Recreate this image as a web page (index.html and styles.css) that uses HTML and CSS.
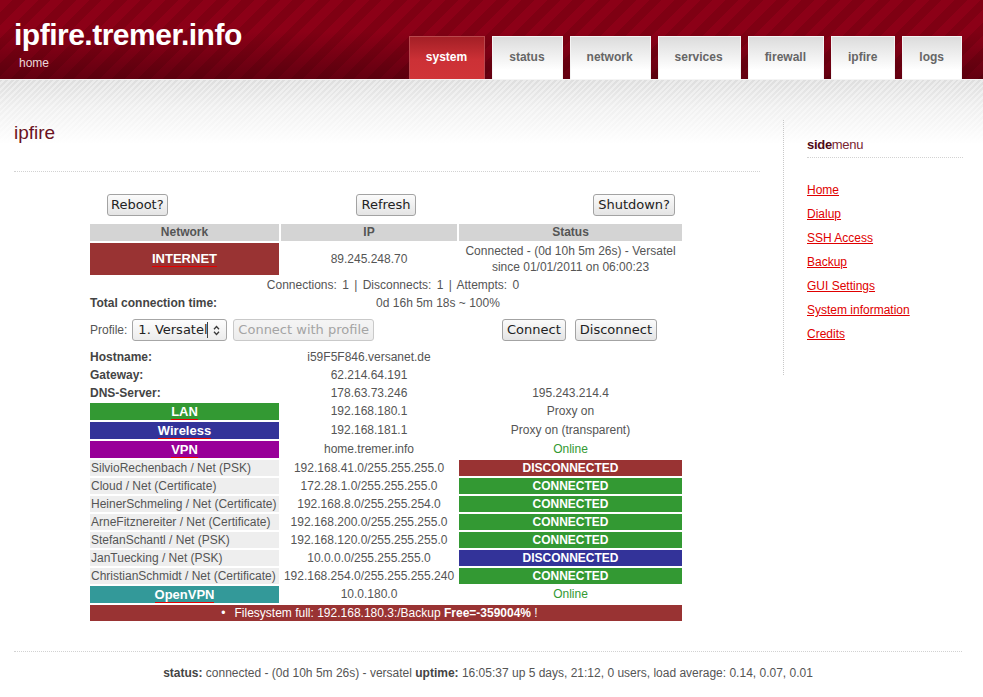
FILE: index.html
```html
<!DOCTYPE html>
<html lang="en">
<head>
<meta charset="utf-8">
<title>ipfire.tremer.info - home</title>
<link rel="stylesheet" href="styles.css">
</head>
<body>
<header class="header">
  <div class="brand">
    <h1 class="brand-title">ipfire.tremer.info</h1>
    <div class="brand-sub">home</div>
  </div>
  <nav class="nav">
    <a class="tab active" href="#">system</a>
    <a class="tab" href="#">status</a>
    <a class="tab" href="#">network</a>
    <a class="tab" href="#">services</a>
    <a class="tab" href="#">firewall</a>
    <a class="tab" href="#">ipfire</a>
    <a class="tab" href="#">logs</a>
  </nav>
</header>
<div class="band">
  <div class="layout">
    <main class="main">
      <h2 class="page-title">ipfire</h2>
      <div class="panel">
        <div class="actions">
          <button class="btn btn-reboot">Reboot?</button>
          <button class="btn">Refresh</button>
          <button class="btn btn-shutdown">Shutdown?</button>
        </div>
        <div class="grid">
          <div class="th">Network</div>
          <div class="th">IP</div>
          <div class="th">Status</div>

          <div class="net net-tall bg-red"><a href="#">INTERNET</a></div>
          <div class="c c-tall">89.245.248.70</div>
          <div class="c">Connected - (0d 10h 5m 26s) - Versatel<br>since 01/01/2011 on 06:00:23</div>

          <div class="span conn">Connections: 1 | Disconnects: 1 | Attempts: 0</div>
          <div class="span total"><span class="lbl total-lbl">Total connection time:</span><span class="total-val">0d 16h 5m 18s ~ 100%</span></div>

          <div class="span profile">
            <span class="profile-lbl">Profile:</span>
            <span class="select"><span class="select-text">1. Versatel</span><svg class="select-arrow" viewBox="0 0 7 11" width="7" height="11"><path d="M1 4.2 L3.5 1.5 L6 4.2 M1 6.8 L3.5 9.5 L6 6.8" fill="none" stroke="#3a3a3a" stroke-width="1.3"/></svg></span>
            <button class="btn btn-disabled" disabled>Connect with profile</button>
            <button class="btn btn-connect">Connect</button>
            <button class="btn btn-disconnect">Disconnect</button>
          </div>

          <div class="lbl">Hostname:</div>
          <div class="c">i59F5F846.versanet.de</div>
          <div class="c"></div>

          <div class="lbl">Gateway:</div>
          <div class="c">62.214.64.191</div>
          <div class="c"></div>

          <div class="lbl">DNS-Server:</div>
          <div class="c">178.63.73.246</div>
          <div class="c">195.243.214.4</div>

          <div class="net bg-green"><a href="#">LAN</a></div>
          <div class="c c17">192.168.180.1</div>
          <div class="c c17">Proxy on</div>

          <div class="net bg-blue"><a href="#">Wireless</a></div>
          <div class="c c17">192.168.181.1</div>
          <div class="c c17">Proxy on (transparent)</div>

          <div class="net bg-purple"><a href="#">VPN</a></div>
          <div class="c c17">home.tremer.info</div>
          <div class="c c17 online">Online</div>

          <div class="vpn">SilvioRechenbach / Net (PSK)</div>
          <div class="c">192.168.41.0/255.255.255.0</div>
          <div class="st bg-red">DISCONNECTED</div>

          <div class="vpn">Cloud / Net (Certificate)</div>
          <div class="c">172.28.1.0/255.255.255.0</div>
          <div class="st bg-green">CONNECTED</div>

          <div class="vpn">HeinerSchmeling / Net (Certificate)</div>
          <div class="c">192.168.8.0/255.255.254.0</div>
          <div class="st bg-green">CONNECTED</div>

          <div class="vpn">ArneFitznereiter / Net (Certificate)</div>
          <div class="c">192.168.200.0/255.255.255.0</div>
          <div class="st bg-green">CONNECTED</div>

          <div class="vpn">StefanSchantl / Net (PSK)</div>
          <div class="c">192.168.120.0/255.255.255.0</div>
          <div class="st bg-green">CONNECTED</div>

          <div class="vpn">JanTuecking / Net (PSK)</div>
          <div class="c">10.0.0.0/255.255.255.0</div>
          <div class="st bg-blue">DISCONNECTED</div>

          <div class="vpn">ChristianSchmidt / Net (Certificate)</div>
          <div class="c">192.168.254.0/255.255.255.240</div>
          <div class="st bg-green">CONNECTED</div>

          <div class="net bg-teal"><a href="#">OpenVPN</a></div>
          <div class="c c17">10.0.180.0</div>
          <div class="c c17 online">Online</div>

          <div class="span alert"><span class="bullet">&bull;</span>Filesystem full: 192.168.180.3:/Backup <b>Free=-359004%</b> !</div>
        </div>
      </div>
    </main>
    <aside class="side">
      <h3 class="side-title"><b>side</b>menu</h3>
      <ul class="side-menu">
        <li><a href="#">Home</a></li>
        <li><a href="#">Dialup</a></li>
        <li><a href="#">SSH Access</a></li>
        <li><a href="#">Backup</a></li>
        <li><a href="#">GUI Settings</a></li>
        <li><a href="#">System information</a></li>
        <li><a href="#">Credits</a></li>
      </ul>
    </aside>
  </div>
  <footer class="footer">
    <b>status:</b> connected - (0d 10h 5m 26s) - versatel <b>uptime:</b> 16:05:37 up 5 days, 21:12, 0 users, load average: 0.14, 0.07, 0.01
  </footer>
</div>
</body>
</html>
```

FILE: styles.css
```css
* { box-sizing: border-box; }

html, body {
  margin: 0;
  padding: 0;
}

body {
  font-family: "Liberation Sans", Arial, Helvetica, sans-serif;
  font-size: 12px;
  color: #555;
  background: #fff;
}

/* ---------- header ---------- */
.header {
  height: 79px;
  display: flex;
  justify-content: space-between;
  padding: 0 21px 0 14px;
  background:
    linear-gradient(to bottom, rgba(0,0,0,0) 40%, rgba(30,0,5,.38) 100%),
    repeating-linear-gradient(135deg, #8c0017 0 9px, #7f0013 9px 18px);
}

.brand { padding-top: 18px; }

.brand-title {
  margin: 0;
  font-size: 30px;
  line-height: 34px;
  font-weight: bold;
  letter-spacing: -0.5px;
  color: #fff;
}

.brand-sub {
  margin-top: 4px;
  padding-left: 5px;
  font-size: 12px;
  line-height: 14px;
  color: #ead8da;
}

.nav {
  display: flex;
  gap: 7px;
  align-self: flex-end;
}

.tab {
  display: block;
  height: 43px;
  padding: 0 17px 0 16px;
  border: 1px solid #f4f4f4;
  border-bottom: 0;
  line-height: 41px;
  font-size: 12px;
  font-weight: bold;
  color: #666;
  text-decoration: none;
  background: linear-gradient(#dcdcdc, #fff 78%);
}

.tab.active {
  color: #fff;
  border-color: #b9484d;
  background: linear-gradient(#a41f26, #cc3136 55%, #d03438);
}

/* ---------- band / layout ---------- */
.band {
  border-top: 1px solid #f4f4f4;
  background:
    linear-gradient(to bottom, rgba(255,255,255,0) 0, rgba(255,255,255,.55) 28px, #fff 64px) 0 0 / 100% 66px no-repeat,
    repeating-linear-gradient(135deg, #dedede 0 2px, #ebebeb 2px 4px) 0 0 / 100% 66px no-repeat,
    #fff;
}

.layout {
  display: flex;
  padding: 0 20px 0 14px;
}

.main {
  width: 746px;
  padding-top: 42px;
}

.page-title {
  margin: 0;
  padding-bottom: 27px;
  border-bottom: 1px dotted #d2d2d2;
  font-size: 19px;
  line-height: 22px;
  font-weight: normal;
  color: #6b1222;
}

.panel {
  width: 592px;
  margin: 22px 0 0 76px;
}

/* ---------- buttons ---------- */
.btn {
  height: 22px;
  padding: 0 4px;
  font-family: "DejaVu Sans", sans-serif;
  font-size: 13px;
  line-height: 20px;
  color: #222;
  border: 1px solid #a3a3a3;
  border-radius: 3px;
  background: linear-gradient(#fbfbfb, #e4e4e4);
}

.btn-disabled {
  margin-left: 6px;
  color: #a4a4a4;
  border-color: #c9c9c9;
  background: linear-gradient(#f5f5f5, #ececec);
}

.btn-connect { margin-left: auto; }
.btn-disconnect { margin-left: 9px; margin-right: 25px; }

.actions {
  display: grid;
  grid-template-columns: 1fr auto 1fr;
  margin-bottom: 8px;
}

.btn-reboot { justify-self: start; margin-left: 17px; padding: 0 3px; }
.btn-shutdown { justify-self: end; margin-right: 7px; }

/* ---------- status grid ---------- */
.grid {
  display: grid;
  grid-template-columns: 189px 176px 223px;
  gap: 2px;
}

.th {
  background: #d4d4d4;
  color: #555;
  font-weight: bold;
  text-align: center;
  line-height: 17px;
}

.c {
  text-align: center;
  line-height: 16px;
  white-space: nowrap;
}

.c17 { line-height: 17px; }
.c-tall { line-height: 32px; }

.online { color: #339933; }

.lbl {
  font-weight: bold;
  color: #444;
  line-height: 16px;
  white-space: nowrap;
}

.net {
  text-align: center;
  font-size: 13px;
  font-weight: bold;
  line-height: 17px;
}

.net-tall { line-height: 32px; }

.net a {
  color: #fff;
  text-decoration: none;
  border-bottom: 1px solid #e60000;
}

.vpn {
  background: #eee;
  padding-left: 1px;
  line-height: 16px;
  white-space: nowrap;
}

.st {
  color: #fff;
  font-weight: bold;
  text-align: center;
  line-height: 16px;
}

.bg-red { background: #993333; }
.bg-green { background: #339933; }
.bg-blue { background: #333399; }
.bg-purple { background: #990099; }
.bg-teal { background: #339999; }

.span { grid-column: 1 / -1; }

.conn {
  text-align: center;
  padding-left: 14px;
  line-height: 16px;
  word-spacing: 2px;
}

.total {
  display: flex;
  line-height: 16px;
}

.total-lbl {
  flex: 0 0 104px;
  min-width: 0;
}

.total-val {
  flex: 1;
  text-align: center;
}

.profile {
  display: flex;
  align-items: center;
  height: 22px;
  margin: 6px 0;
}

.profile-lbl { color: #555; }

.select {
  display: inline-flex;
  align-items: center;
  width: 95px;
  height: 22px;
  margin-left: 5px;
  padding-left: 5px;
  border: 1px solid #a6a6a6;
  border-radius: 3px;
  background: linear-gradient(#fdfdfd, #ececec);
  font-family: "DejaVu Sans", sans-serif;
  font-size: 13px;
  color: #222;
}

.select-text {
  flex: 0 0 70px;
  line-height: 16px;
  border-right: 1px solid #444;
  white-space: nowrap;
  overflow: hidden;
}

.select-arrow {
  margin-left: 5px;
}

.alert {
  background: #993333;
  color: #fff;
  text-align: center;
  line-height: 16px;
}

.bullet {
  margin-left: -13px;
  margin-right: 9px;
}

/* ---------- side menu ---------- */
.side {
  align-self: flex-start;
  width: 180px;
  margin-left: 23px;
  margin-top: 40px;
  padding: 0 0 29px 23px;
  border-left: 1px dotted #c8c8c8;
}

.side-title {
  margin: 0;
  padding: 17px 0 4px;
  border-bottom: 1px dotted #d2d2d2;
  font-size: 13px;
  line-height: 16px;
  font-weight: normal;
  letter-spacing: -0.3px;
  color: #7a2631;
}

.side-title b {
  font-weight: bold;
  color: #4f0a16;
}

.side-menu {
  list-style: none;
  margin: 20px 0 0;
  padding: 0;
}

.side-menu li { line-height: 24px; }

.side-menu a {
  color: #e00000;
  text-decoration: underline;
}

/* ---------- footer ---------- */
.footer {
  margin: 30px 21px 0 14px;
  padding: 13px 0 10px;
  border-top: 1px dotted #d2d2d2;
  text-align: center;
  line-height: 16px;
  color: #555;
}

.footer b { color: #444; }
```
